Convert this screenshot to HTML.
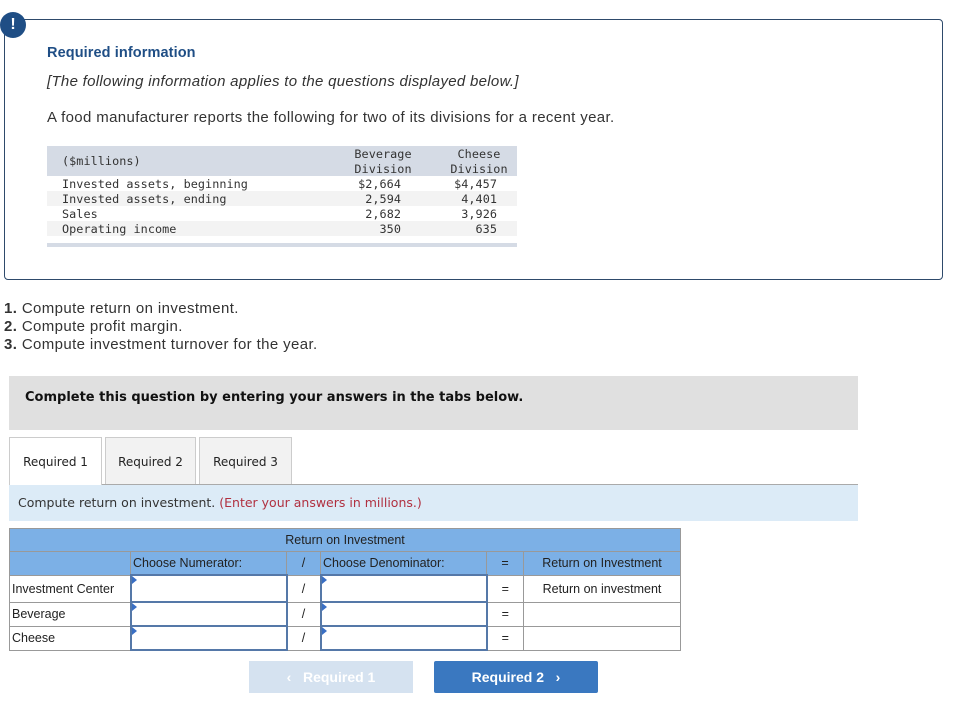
<!DOCTYPE html>
<html><head><style>
body{margin:0;width:963px;height:724px;background:#fff;font-family:"Liberation Sans",sans-serif;position:relative;overflow:hidden}
.a{position:absolute}
.mono{font-family:"DejaVu Sans Mono","Liberation Mono",monospace;font-size:11.8px;color:#333;letter-spacing:0.05px}
.tab{position:absolute;top:437px;height:46px;border:1px solid #ccc;border-bottom:none;background:#f2f2f2;font-family:"DejaVu Sans",sans-serif;font-size:12px;color:#222;text-align:center;line-height:48px}
table.g{position:absolute;left:9px;top:528px;border-collapse:collapse;font-size:12.5px;color:#222}
table.g td{border:1px solid #999;padding:0 2px;height:22px}
.inp{border:2px solid #5578a8 !important;position:relative}
.inp:before{content:"";position:absolute;left:0;top:0;border-left:5px solid #3a6fc4;border-top:4px solid transparent;border-bottom:4px solid transparent}
</style></head><body>
<div class="a" style="left:4px;top:19px;width:937px;height:259px;border:1px solid #2e4a6b;border-radius:4px"></div>
<div class="a" style="left:0;top:12px;width:26px;height:26px;border-radius:13px;background:#1f4e85;color:#fff;font-weight:bold;font-size:16px;text-align:center;line-height:26px">!</div>
<div class="a" style="left:47px;top:45px;font-size:14.5px;font-weight:bold;color:#1f4e85;letter-spacing:0.1px">Required information</div>
<div class="a" style="left:47px;top:73px;font-size:15px;font-style:italic;color:#333;letter-spacing:0.3px">[The following information applies to the questions displayed below.]</div>
<div class="a" style="left:47px;top:109px;font-size:15px;color:#333;letter-spacing:0.36px">A food manufacturer reports the following for two of its divisions for a recent year.</div>
<div class="a" style="left:47px;top:146px;width:470px;height:30px;background:#d5dbe5"></div>
<div class="a" style="left:47px;top:191px;width:470px;height:15px;background:#f3f3f3"></div>
<div class="a" style="left:47px;top:221px;width:470px;height:15px;background:#f3f3f3"></div>
<div class="a" style="left:47px;top:243px;width:470px;height:4px;background:#d5dbe5"></div>
<div class="a mono" style="left:62px;top:154px">($millions)</div>
<div class="a mono" style="left:350px;top:147px;width:66px;text-align:center;line-height:15px">Beverage<br>Division</div>
<div class="a mono" style="left:446px;top:147px;width:66px;text-align:center;line-height:15px">Cheese<br>Division</div>
<div class="a mono" style="left:62px;top:177px;line-height:15px">Invested assets, beginning<br>Invested assets, ending<br>Sales<br>Operating income</div>
<div class="a mono" style="left:340px;top:177px;width:61px;text-align:right;line-height:15px">$2,664<br>2,594<br>2,682<br>350</div>
<div class="a mono" style="left:436px;top:177px;width:61px;text-align:right;line-height:15px">$4,457<br>4,401<br>3,926<br>635</div>
<div class="a" style="left:4px;top:300px;font-size:15px;color:#333;line-height:18px;letter-spacing:0.38px"><b>1.</b> Compute return on investment.<br><b>2.</b> Compute profit margin.<br><b>3.</b> Compute investment turnover for the year.</div>
<div class="a" style="left:9px;top:376px;width:849px;height:54px;background:#e0e0e0"></div>
<div class="a" style="left:25px;top:390px;font-family:'DejaVu Sans',sans-serif;font-size:13px;font-weight:bold;color:#111">Complete this question by entering your answers in the tabs below.</div>
<div class="tab" style="left:9px;width:91px;background:#fff;height:47px;z-index:2">Required 1</div>
<div class="tab" style="left:105px;width:89px">Required 2</div>
<div class="tab" style="left:199px;width:91px">Required 3</div>
<div class="a" style="left:9px;top:484px;width:849px;height:36px;background:#dcebf7;border-top:1px solid #aaa"></div>
<div class="a" style="left:18px;top:495px;font-family:'DejaVu Sans',sans-serif;font-size:12.5px;color:#333">Compute return on investment. <span style="color:#b03040">(Enter your answers in millions.)</span></div>
<table class="g">
<tr style="background:#7cb0e6"><td colspan="6" style="text-align:center;height:22px">Return on Investment</td></tr>
<tr style="background:#7cb0e6"><td style="width:116px"></td><td style="width:151px">Choose Numerator:</td><td style="width:29px;text-align:center">/</td><td style="width:161px">Choose Denominator:</td><td style="width:32px;text-align:center">=</td><td style="width:152px;text-align:center">Return on Investment</td></tr>
<tr style="height:27px"><td>Investment Center</td><td class="inp"></td><td style="text-align:center">/</td><td class="inp"></td><td style="text-align:center">=</td><td style="text-align:center">Return on investment</td></tr>
<tr><td>Beverage</td><td class="inp"></td><td style="text-align:center">/</td><td class="inp"></td><td style="text-align:center">=</td><td></td></tr>
<tr><td>Cheese</td><td class="inp"></td><td style="text-align:center">/</td><td class="inp"></td><td style="text-align:center">=</td><td></td></tr>
</table>
<div class="a" style="left:249px;top:661px;width:164px;height:32px;background:#d5e2f0;color:#fff;font-weight:bold;font-size:14px;text-align:center;line-height:32px">‹&nbsp;&nbsp; Required 1</div>
<div class="a" style="left:434px;top:661px;width:164px;height:32px;background:#3a78c0;color:#fff;font-weight:bold;font-size:14px;text-align:center;line-height:32px;border-radius:2px">Required 2 &nbsp;&nbsp;›</div>
</body></html>
